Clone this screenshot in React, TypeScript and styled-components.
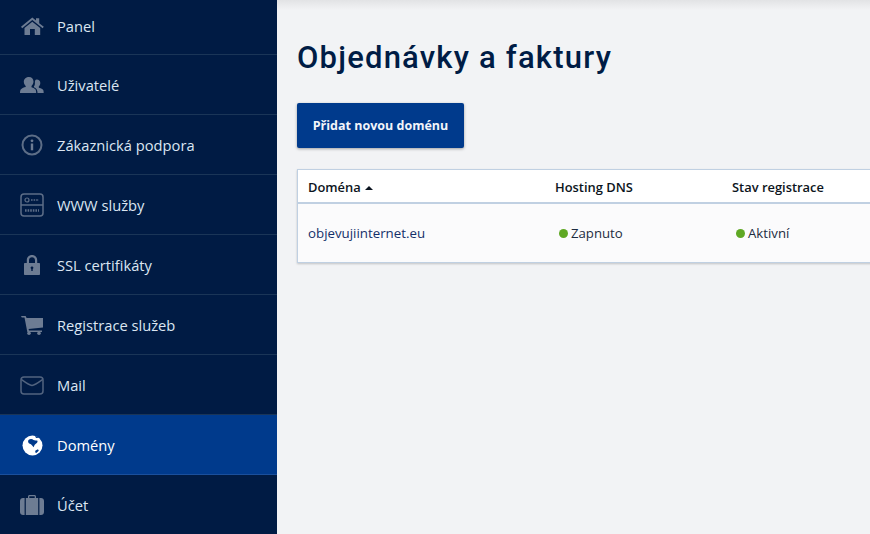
import React from "react";
import styled, { createGlobalStyle } from "styled-components";

const GlobalStyle = createGlobalStyle`
    html, body {
        margin: 0;
        height: 100%;
        overflow: hidden;
        background: #f2f3f5;
        font-family: "Open Sans", "Liberation Sans", sans-serif;
    }
`;

const HomeIcon = () => (
    <svg width="23" height="18" viewBox="0 0 23 18" fill="currentColor">
        <path d="M0 9.800 11.300.6l3.700 3V1.200h3.200v5L22.800 9.800l-1.200 1.500-10.300-8.200L1.200 11.300z" />
        <path d="M3.500 11 11.300 4.700 19.200 11v7h-5.400v-6H9v6H3.500z" />
    </svg>
);

const UsersIcon = () => (
    <svg width="24" height="16" viewBox="0 0 24 16" fill="currentColor">
        <path d="M9 0c2.700 0 4.500 2 4.500 4.600 0 1.800-.8 3.400-2 4.300v1.300c1.500.5 2.800 1.100 3.800 2 .6.6.9 2.100.9 3.800H0c0-1.800.3-3.200 1-3.800 1.200-1 2.900-1.700 4.700-2.100V8.900c-1.200-.9-1.900-2.500-1.900-4.300C3.800 2 6.300 0 9 0z" />
        <path d="M16.800 2.600c2 0 3.500 1.500 3.500 3.500 0 1.400-.6 2.600-1.500 3.300v1.300c1.500.4 3.300 1.100 4.200 2 .5.500.7 1.800.7 3.300h-6.200c0-2-.5-3.500-1.600-4.500-.6-.5-1.200-.9-2-1.200V9.200c1.100-1 1-2.200 1-3.200 0-1.800.1-3.400 1.900-3.400z" />
    </svg>
);

const InfoIcon = () => (
    <svg width="22" height="22" viewBox="0 0 22 22" fill="none">
        <circle cx="11" cy="11" r="9.500" stroke="currentColor" strokeWidth="2" opacity="0.85" />
        <circle cx="11" cy="6.800" r="1.400" fill="currentColor" />
        <rect x="9.800" y="9.500" width="2.400" height="6.800" fill="currentColor" />
    </svg>
);

const ServerIcon = () => (
    <svg width="24" height="24" viewBox="0 0 24 24" fill="none" stroke="currentColor" opacity="0.85">
        <rect x="1" y="1" width="22" height="22" rx="3" strokeWidth="1.500" />
        <path d="M1 12h22" strokeWidth="1.500" />
        <circle cx="7" cy="7" r="2" strokeWidth="1.200" />
        <path d="M11 7h8" strokeWidth="1.600" strokeDasharray="1.600 1" />
        <path d="M5 17.500h14" strokeWidth="2.400" strokeDasharray="1.600 1" />
    </svg>
);

const LockIcon = () => (
    <svg width="16" height="20" viewBox="0 0 16 20" fill="currentColor">
        <path
            fillRule="evenodd"
            d="M8 0c3 0 5.200 2.200 5.200 5.200V8H15c.6 0 1 .4 1 1v10c0 .6-.4 1-1 1H1c-.6 0-1-.4-1-1V9c0-.6.4-1 1-1h1.800V5.200C2.800 2.200 5 0 8 0zm0 2.200c-1.700 0-3 1.300-3 3V8h6V5.200c0-1.700-1.300-3-3-3zM8 11.500c-.8 0-1.400.6-1.400 1.300 0 .5.300 1 .7 1.200V16h1.400v-2c.4-.2.700-.7.700-1.200 0-.7-.6-1.300-1.400-1.300z"
        />
    </svg>
);

const CartIcon = () => (
    <svg width="22" height="19" viewBox="0 0 22 19" fill="currentColor">
        <path d="M0 0h4.600l1 2H22v9.500L7.600 13l.4 1.400h13V16H6.300L3.500 1.600H.8z" />
        <circle cx="8" cy="17.200" r="1.800" />
        <circle cx="18" cy="17.200" r="1.800" />
    </svg>
);

const MailIcon = () => (
    <svg width="24" height="19" viewBox="0 0 24 19" fill="none" stroke="currentColor" strokeWidth="1.500" opacity="0.75">
        <rect x="1" y="1" width="22" height="17" rx="3" />
        <path d="M1.500 3.500C5 6 9 9 12 9.500 15 9 19 6 22.500 3.500" />
    </svg>
);

const GlobeIcon = () => (
    <svg width="21" height="21" viewBox="0 0 21 21">
        <circle cx="10.500" cy="10.500" r="10" fill="#fff" />
        <path
            fill="#003a8c"
            d="M6.500 5c1.500-1.500 4-1.200 5 0 1 .8 3 0 4 .8.500 1.800-1.500 3-2.500 3.800-.7.7-.8 2-1.400 2.600-1-1.300-2.200-2.800-3.800-3.400C6.400 8.300 5.500 6.300 6.500 5z"
        />
        <path fill="#003a8c" d="M13.500 15.500l2.500-1.200.8 1.500-2.500 2.300-1.200-.8z" />
        <path fill="#003a8c" d="M13 .8c1.500.3 2.800 1 3.800 2l-2.800.2z" />
    </svg>
);

const CaseIcon = () => (
    <svg width="24" height="20" viewBox="0 0 24 20" fill="currentColor">
        <path d="M8 3V1.500C8 .7 8.700 0 9.500 0h5c.8 0 1.500.7 1.500 1.500V3h-1.300V1.300H9.300V3z" />
        <path d="M3 3h1.600v17H3c-1.700 0-3-1.300-3-3V6c0-1.700 1.300-3 3-3z" />
        <rect x="5.800" y="3" width="12.400" height="17" />
        <path d="M19.400 3H21c1.700 0 3 1.300 3 3v11c0 1.700-1.300 3-3 3h-1.600z" />
    </svg>
);

const navItems = [
    { label: "Panel", icon: <HomeIcon /> },
    { label: "Uživatelé", icon: <UsersIcon /> },
    { label: "Zákaznická podpora", icon: <InfoIcon /> },
    { label: "WWW služby", icon: <ServerIcon /> },
    { label: "SSL certifikáty", icon: <LockIcon /> },
    { label: "Registrace služeb", icon: <CartIcon /> },
    { label: "Mail", icon: <MailIcon /> },
    { label: "Domény", icon: <GlobeIcon />, active: true },
    { label: "Účet", icon: <CaseIcon /> },
];

const App = () => (
    <Page>
        <GlobalStyle />
        <Sidebar>
            {navItems.map((item) => (
                <NavRow key={item.label} $active={item.active}>
                    <NavIcon $active={item.active}>{item.icon}</NavIcon>
                    <span>{item.label}</span>
                </NavRow>
            ))}
        </Sidebar>
        <Main>
            <Title>Objednávky a faktury</Title>
            <PrimaryButton>Přidat novou doménu</PrimaryButton>
            <DomainTable>
                <HeadRow>
                    <HeadCell>
                        Doména <SortArrow />
                    </HeadCell>
                    <HeadCell>Hosting DNS</HeadCell>
                    <HeadCell>Stav registrace</HeadCell>
                </HeadRow>
                <BodyRow>
                    <DomainLink>objevujiinternet.eu</DomainLink>
                    <StatusCell>
                        <Dot /> Zapnuto
                    </StatusCell>
                    <StatusCell>
                        <Dot /> Aktivní
                    </StatusCell>
                </BodyRow>
            </DomainTable>
        </Main>
    </Page>
);

const Page = styled.div`
    display: flex;
    width: 870px;
    height: 534px;
    overflow: hidden;
`;

const Sidebar = styled.nav`
    flex: 0 0 277px;
    height: 534px;
    overflow: hidden;
    background: #001b44;
`;

const NavRow = styled.div<{ $active?: boolean }>`
    display: flex;
    align-items: center;
    box-sizing: border-box;
    height: 60px;
    padding: 1px 0 0 20px;
    background: ${(p) => (p.$active ? "#003a8c" : "transparent")};
    border-bottom: 1px solid ${(p) => (p.$active ? "#1a4f9c" : "#1a3557")};
    color: ${(p) => (p.$active ? "#ffffff" : "#dbe6f2")};
    font-size: 14.7px;

    &:first-child {
        height: 55px;
        padding: 0 0 2px 20px;
    }
`;

const NavIcon = styled.span<{ $active?: boolean }>`
    display: flex;
    align-items: center;
    justify-content: center;
    width: 24px;
    height: 24px;
    margin-right: 13px;
    color: ${(p) => (p.$active ? "#ffffff" : "#6d7c93")};
`;

const Main = styled.main`
    flex: 1;
    min-width: 0;
    box-sizing: border-box;
    padding: 38px 0 0 20px;
    background: linear-gradient(#e2e3e5, #f2f3f5 10px);
`;

const Title = styled.h1`
    margin: 0;
    font-family: "Roboto", "Liberation Sans", sans-serif;
    font-size: 31px;
    line-height: 40px;
    font-weight: 500;
    letter-spacing: 1.2px;
    color: #001c45;
`;

const PrimaryButton = styled.button`
    display: block;
    width: 167px;
    height: 45px;
    margin-top: 25px;
    padding: 0 0 1px;
    border: 0;
    border-radius: 2px;
    background: #003a8c;
    box-shadow: 0 1px 3px rgba(0, 0, 0, 0.35);
    color: #f2f5fa;
    font-family: "Open Sans", sans-serif;
    font-size: 12.5px;
    font-weight: 700;
`;

const DomainTable = styled.div`
    width: 620px;
    margin-top: 21px;
    background: #fbfbfc;
    border: 1px solid #c0d0e2;
    border-right: 0;
    box-shadow: 0 1px 2px rgba(0, 0, 0, 0.2);
`;

const HeadRow = styled.div`
    display: grid;
    grid-template-columns: 247px 177px 1fr;
    align-items: center;
    box-sizing: border-box;
    height: 34px;
    padding: 2px 0 0 10px;
    background: #fff;
    border-bottom: 2px solid #c0d0e2;
`;

const HeadCell = styled.div`
    font-size: 12.9px;
    font-weight: 600;
    color: #0c1420;
`;

const SortArrow = styled.span`
    display: inline-block;
    margin: 0 0 2px 1px;
    border-left: 4px solid transparent;
    border-right: 4px solid transparent;
    border-bottom: 4px solid #0c1420;
`;

const BodyRow = styled.div`
    display: grid;
    grid-template-columns: 247px 177px 1fr;
    align-items: center;
    height: 58px;
    padding-left: 10px;
`;

const DomainLink = styled.div`
    font-size: 13.3px;
    color: #14306a;
`;

const StatusCell = styled.div`
    display: flex;
    align-items: center;
    gap: 3px;
    padding-left: 4px;
    font-size: 13.2px;
    color: #1d2c40;
`;

const Dot = styled.span`
    width: 9px;
    height: 9px;
    border-radius: 50%;
    background: #5fa824;
`;

export default App;
